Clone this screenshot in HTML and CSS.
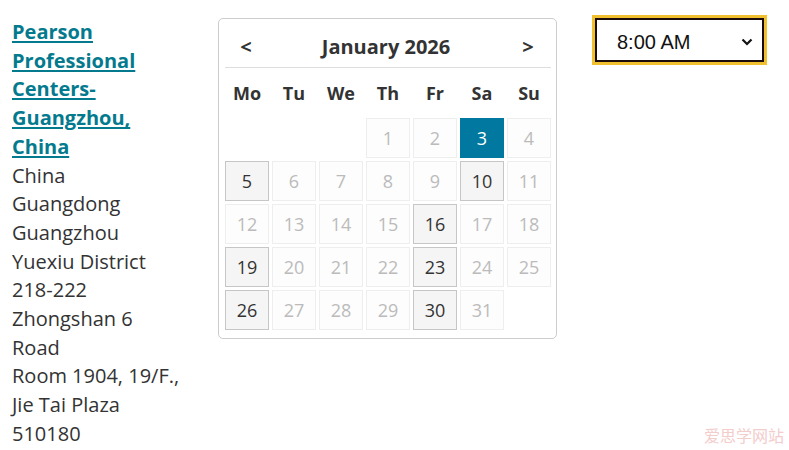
FILE: index.html
```html
<!DOCTYPE html>
<html lang="en">
<head>
<meta charset="utf-8">
<title>Schedule</title>
<link rel="stylesheet" href="styles.css">
</head>
<body>
<div class="page">
  <div class="address">
    <a class="center-link" href="#">Pearson Professional Centers-Guangzhou, China</a>
    <div>China</div>
    <div>Guangdong</div>
    <div>Guangzhou</div>
    <div>Yuexiu District</div>
    <div>218-222 Zhongshan 6 Road</div>
    <div>Room 1904, 19/F., Jie Tai Plaza</div>
    <div>510180</div>
  </div>

  <div class="calendar">
    <div class="cal-head">
      <span class="nav">&lt;</span>
      <span class="title">January 2026</span>
      <span class="nav">&gt;</span>
    </div>
    <div class="weekdays">
      <span>Mo</span><span>Tu</span><span>We</span><span>Th</span><span>Fr</span><span>Sa</span><span>Su</span>
    </div>
    <div class="days">
      <span class="empty"></span><span class="empty"></span><span class="empty"></span>
      <span class="day off">1</span><span class="day off">2</span><span class="day sel">3</span><span class="day off">4</span>
      <span class="day on">5</span><span class="day off">6</span><span class="day off">7</span><span class="day off">8</span><span class="day off">9</span><span class="day on">10</span><span class="day off">11</span>
      <span class="day off">12</span><span class="day off">13</span><span class="day off">14</span><span class="day off">15</span><span class="day on">16</span><span class="day off">17</span><span class="day off">18</span>
      <span class="day on">19</span><span class="day off">20</span><span class="day off">21</span><span class="day off">22</span><span class="day on">23</span><span class="day off">24</span><span class="day off">25</span>
      <span class="day on">26</span><span class="day off">27</span><span class="day off">28</span><span class="day off">29</span><span class="day on">30</span><span class="day off">31</span><span class="empty"></span>
    </div>
  </div>

  <div class="time-wrap">
    <select class="time">
      <option>8:00 AM</option>
    </select>
    <svg class="chev" width="12" height="8" viewBox="0 0 12 8"><path d="M1.5 1.5 L6 6 L10.5 1.5" fill="none" stroke="#111" stroke-width="2.2"/></svg>
  </div>
</div>
<div class="watermark">爱思学网站</div>
</body>
</html>
```

FILE: styles.css
```css
html, body {
  margin: 0;
  padding: 0;
  background: #fff;
}
body {
  font-family: "Open Sans", "Noto Sans", sans-serif;
  color: #333;
  width: 789px;
  height: 450px;
  overflow: hidden;
  position: relative;
}
.page {
  display: flex;
  align-items: flex-start;
  padding: 15px 0 0 12px;
}
.address {
  width: 168px;
  font-size: 20px;
  line-height: 28.7px;
  margin-top: 3px;
}
.center-link {
  display: block;
  color: #047a8e;
  font-weight: 700;
  text-decoration: underline;
  text-underline-offset: 2px;
}
.calendar {
  margin-left: 38px;
  margin-top: 3px;
  width: 326px;
  border: 1px solid #ccc;
  border-radius: 5px;
  padding: 6px 5px 8px 6px;
}
.cal-head {
  display: grid;
  grid-template-columns: 42px 1fr 46px;
  align-items: center;
  height: 42px;
  border-bottom: 1px solid #ddd;
  font-weight: 700;
  font-size: 20px;
  text-align: center;
}
.weekdays {
  display: grid;
  grid-template-columns: repeat(7, 44px);
  column-gap: 3px;
  height: 50px;
  align-items: center;
  text-align: center;
  font-weight: 700;
  font-size: 18px;
}
.days {
  display: grid;
  grid-template-columns: repeat(7, 44px);
  grid-auto-rows: 40px;
  gap: 3px;
}
.day {
  box-sizing: border-box;
  display: flex;
  align-items: center;
  justify-content: center;
  font-size: 18px;
  border: 1px solid #eee;
  background: #fdfdfd;
  color: #bbb;
}
.day.on {
  background: #f5f5f5;
  border-color: #c6c6c6;
  color: #333;
}
.day.sel {
  background: #00789f;
  border-color: #00789f;
  color: #fff;
}
.time-wrap {
  position: relative;
  margin-left: 35px;
}
.time {
  -webkit-appearance: none;
  appearance: none;
  box-sizing: border-box;
  width: 169px;
  height: 44px;
  margin: 3px;
  border: 2px solid #1a0a0a;
  outline: 3px solid #f0c02e;
  background: #fff;
  font-family: "Liberation Sans", Arial, sans-serif;
  font-size: 20px;
  color: #111;
  padding: 3px 0 0 20px;
}
.chev {
  position: absolute;
  right: 14px;
  top: 23px;
  pointer-events: none;
}
.watermark {
  position: absolute;
  right: 5px;
  bottom: 3px;
  font-family: "Noto Sans CJK SC", sans-serif;
  font-size: 16px;
  color: #f3cccc;
}
```
